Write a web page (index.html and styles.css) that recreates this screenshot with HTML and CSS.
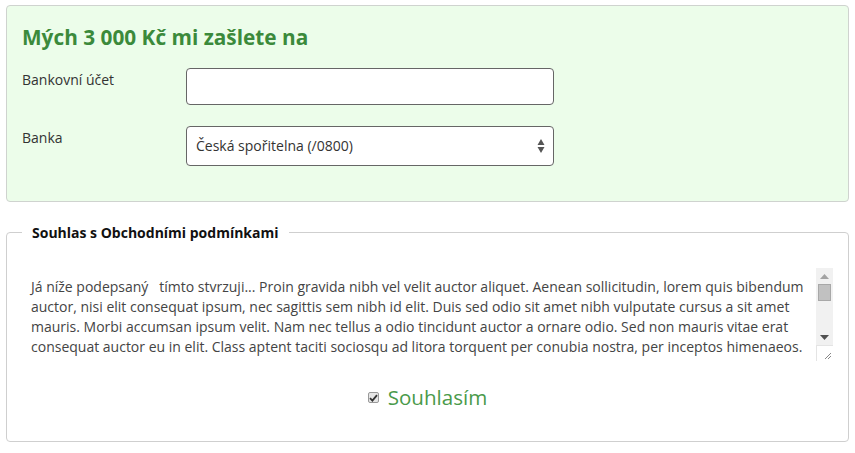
FILE: index.html
```html
<!DOCTYPE html>
<html lang="cs">
<head>
<meta charset="utf-8">
<title>Formulář</title>
<link rel="stylesheet" href="styles.css">
</head>
<body>
<div class="page">
  <section class="payout">
    <h2 class="payout-title">Mých 3 000 Kč mi zašlete na</h2>
    <div class="form-row">
      <label class="form-label" for="acc">Bankovní účet</label>
      <input class="form-input" id="acc" type="text">
    </div>
    <div class="form-row">
      <label class="form-label" for="bank">Banka</label>
      <div class="form-select" id="bank">
        <span class="select-value">Česká spořitelna (/0800)</span>
        <svg class="select-arrows" width="8" height="16" viewBox="0 0 8 16"><path d="M4 1 L7.5 7 H0.5 Z M0.5 9 H7.5 L4 15 Z" fill="#555"/></svg>
      </div>
    </div>
  </section>

  <fieldset class="terms">
    <legend class="terms-legend">Souhlas s Obchodními podmínkami</legend>
    <div class="terms-box">
      <div class="terms-text">Já níže podepsaný&nbsp;&nbsp; tímto stvrzuji... Proin gravida nibh vel velit auctor aliquet. Aenean sollicitudin, lorem quis bibendum auctor, nisi elit consequat ipsum, nec sagittis sem nibh id elit. Duis sed odio sit amet nibh vulputate cursus a sit amet mauris. Morbi accumsan ipsum velit. Nam nec tellus a odio tincidunt auctor a ornare odio. Sed non mauris vitae erat consequat auctor eu in elit. Class aptent taciti sociosqu ad litora torquent per conubia nostra, per inceptos himenaeos.</div>
      <div class="scrollbar">
        <div class="scroll-track">
          <svg class="scroll-up" width="9" height="5" viewBox="0 0 9 5"><path d="M4.5 0 L9 5 H0 Z" fill="#a3a3a3"/></svg>
          <div class="scroll-thumb"></div>
          <svg class="scroll-down" width="9" height="5" viewBox="0 0 9 5"><path d="M0 0 H9 L4.5 5 Z" fill="#505050"/></svg>
        </div>
        <div class="scroll-corner">
          <svg width="7" height="7" viewBox="0 0 7 7"><path d="M1 7 L7 1 M4 7 L7 4" stroke="#888" stroke-width="1"/></svg>
        </div>
      </div>
    </div>
    <label class="agree">
      <span class="agree-check"><svg width="9" height="8" viewBox="0 0 9 8"><path d="M1 4.2 L3.4 6.6 L8 1.2" stroke="#333" stroke-width="1.8" fill="none"/></svg></span>
      <span class="agree-text">Souhlasím</span>
    </label>
  </fieldset>
</div>
</body>
</html>
```
FILE: styles.css
```css
* { box-sizing: border-box; }
html, body { margin: 0; padding: 0; background: #fff; }
body {
  font-family: "Open Sans", "DejaVu Sans", sans-serif;
  font-size: 14px;
  color: #333;
}
.page { padding: 5px 6px 0 6px; }

.payout {
  background: #ecfdea;
  border: 1px solid #cfd3cf;
  border-radius: 4px;
  padding: 18px 15px 35px 15px;
}
.payout-title {
  margin: 0 0 17px 0;
  font-size: 20.8px;
  line-height: 27px;
  font-weight: 700;
  color: #3b8a3b;
}
.form-row {
  display: flex;
  align-items: flex-start;
  margin-bottom: 21px;
}
.form-row:last-child { margin-bottom: 0; }
.form-label {
  width: 164px;
  flex: none;
  font-size: 14px;
  line-height: 20px;
  padding-top: 2px;
}
.form-input {
  width: 368px;
  height: 37px;
  border: 1px solid #666;
  border-radius: 4px;
  background: #fff;
  margin: 0;
  padding: 0 10px;
  font: inherit;
}
.form-select {
  width: 368px;
  height: 40px;
  border: 1px solid #666;
  border-radius: 4px;
  background: #fff;
  display: flex;
  align-items: center;
  justify-content: space-between;
  padding: 0 8px 1px 9px;
  font-size: 14px;
}

.terms {
  margin: 21px 0 0 0;
  border: 1px solid #cfcfcf;
  border-radius: 4px;
  padding: 26px 15px 30px 15px;
  min-width: 0;
}
.terms-legend {
  padding: 0 10px;
  font-size: 14px;
  font-weight: 700;
  color: #111;
  line-height: 19px;
}
.terms-box {
  display: flex;
  height: 93px;
  overflow: hidden;
}
.terms-text {
  flex: 1;
  padding: 9px 6px 0 9px;
  font-size: 14px;
  line-height: 20px;
  color: #444;
}
.scrollbar {
  width: 17px;
  flex: none;
  display: flex;
  flex-direction: column;
}
.scroll-track {
  flex: 1;
  background: #f1f1f1;
  display: flex;
  flex-direction: column;
  align-items: center;
  padding: 6px 0 5px 0;
}
.scroll-up { flex: none; }
.scroll-thumb {
  width: 13px;
  height: 17px;
  margin-top: 5px;
  background: #c1c1c1;
  border: 1px solid #a8a8a8;
}
.scroll-down { flex: none; margin-top: auto; }
.scroll-corner {
  height: 16px;
  flex: none;
  background: #fff;
  border-left: 1px solid #e4e4e4;
  border-top: 1px solid #e4e4e4;
  display: flex;
  align-items: flex-end;
  justify-content: flex-end;
  padding: 0 2px 2px 0;
}

.agree {
  display: flex;
  justify-content: center;
  align-items: center;
  gap: 9px;
  margin-top: 23px;
}
.agree-check {
  width: 11px;
  height: 11px;
  border: 1px solid #999;
  border-radius: 2px;
  background: #e6e6e6;
  display: flex;
  align-items: center;
  justify-content: center;
}
.agree-text {
  font-size: 20.6px;
  line-height: 27px;
  color: #4a9a4a;
}
```
